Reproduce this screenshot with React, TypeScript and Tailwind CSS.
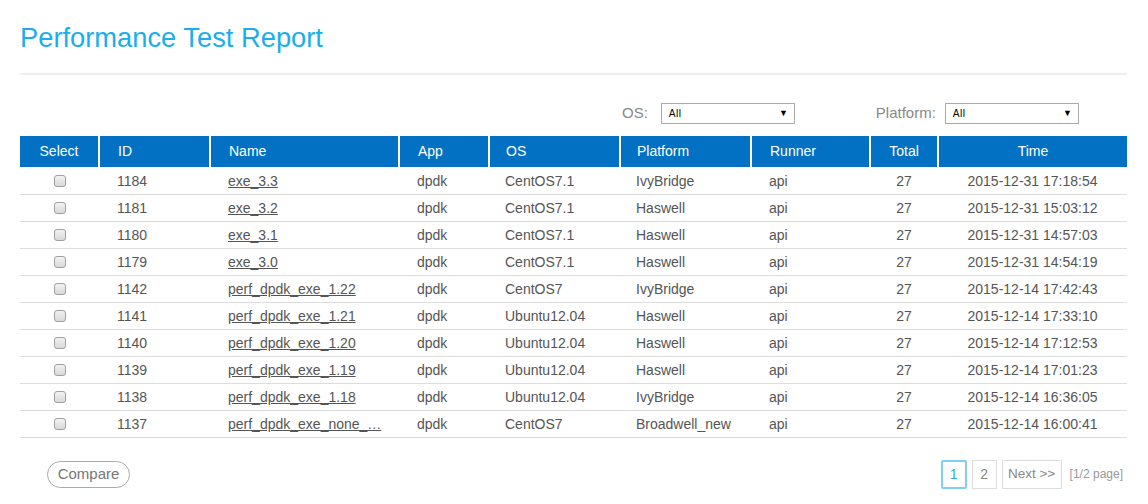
import React from 'react';

interface Report {
    id: number;
    name: string;
    app: string;
    os: string;
    platform: string;
    runner: string;
    total: number;
    time: string;
}

const reports: Report[] = [
    { id: 1184, name: 'exe_3.3', app: 'dpdk', os: 'CentOS7.1', platform: 'IvyBridge', runner: 'api', total: 27, time: '2015-12-31 17:18:54' },
    { id: 1181, name: 'exe_3.2', app: 'dpdk', os: 'CentOS7.1', platform: 'Haswell', runner: 'api', total: 27, time: '2015-12-31 15:03:12' },
    { id: 1180, name: 'exe_3.1', app: 'dpdk', os: 'CentOS7.1', platform: 'Haswell', runner: 'api', total: 27, time: '2015-12-31 14:57:03' },
    { id: 1179, name: 'exe_3.0', app: 'dpdk', os: 'CentOS7.1', platform: 'Haswell', runner: 'api', total: 27, time: '2015-12-31 14:54:19' },
    { id: 1142, name: 'perf_dpdk_exe_1.22', app: 'dpdk', os: 'CentOS7', platform: 'IvyBridge', runner: 'api', total: 27, time: '2015-12-14 17:42:43' },
    { id: 1141, name: 'perf_dpdk_exe_1.21', app: 'dpdk', os: 'Ubuntu12.04', platform: 'Haswell', runner: 'api', total: 27, time: '2015-12-14 17:33:10' },
    { id: 1140, name: 'perf_dpdk_exe_1.20', app: 'dpdk', os: 'Ubuntu12.04', platform: 'Haswell', runner: 'api', total: 27, time: '2015-12-14 17:12:53' },
    { id: 1139, name: 'perf_dpdk_exe_1.19', app: 'dpdk', os: 'Ubuntu12.04', platform: 'Haswell', runner: 'api', total: 27, time: '2015-12-14 17:01:23' },
    { id: 1138, name: 'perf_dpdk_exe_1.18', app: 'dpdk', os: 'Ubuntu12.04', platform: 'IvyBridge', runner: 'api', total: 27, time: '2015-12-14 16:36:05' },
    { id: 1137, name: 'perf_dpdk_exe_none_…', app: 'dpdk', os: 'CentOS7', platform: 'Broadwell_new', runner: 'api', total: 27, time: '2015-12-14 16:00:41' },
];

const FakeSelect: React.FC = () => (
    <div className="w-[134px] h-[21px] border border-[#a9a9a9] bg-white flex items-center justify-between pl-[7px] pr-[6px] text-[11px] text-black">
        <span className="font-['DejaVu_Sans',sans-serif] text-[10px]">All</span>
        <span className="text-[9px]">▼</span>
    </div>
);

const App: React.FC = () => {
    const th = 'h-[31px] font-normal text-white border-r-2 border-white';
    const td = 'h-[27px] pt-[2px] border-b border-[#dddddd]';

    return (
        <div className="w-[1148px] h-[504px] bg-white font-['Liberation_Sans',Arial,sans-serif] text-[14px] text-[#555]">
            <div className="ml-[20px] w-[1107px]">
                {/* Title */}
                <h1 className="pt-[22px] pb-[19px] text-[27.3px] leading-[32px] text-[#19aeec]">Performance Test Report</h1>
                <div className="h-[2px] bg-[#eeeeee]"></div>

                {/* Filters */}
                <div className="mt-[28px] h-[21px] flex items-center text-[#888] text-[15px]">
                    <span className="ml-[602px] mr-[13px]">OS:</span>
                    <FakeSelect />
                    <span className="ml-[81px] mr-[9px]">Platform:</span>
                    <FakeSelect />
                </div>

                {/* Table */}
                <table className="mt-[12px] w-[1107px] table-fixed border-collapse">
                    <colgroup>
                        <col className="w-[79px]" />
                        <col className="w-[111px]" />
                        <col className="w-[189px]" />
                        <col className="w-[90px]" />
                        <col className="w-[131px]" />
                        <col className="w-[131px]" />
                        <col className="w-[119px]" />
                        <col className="w-[68px]" />
                        <col className="w-[189px]" />
                    </colgroup>
                    <thead>
                        <tr className="bg-[#0271c3]">
                            <th className={`${th} text-center`}>Select</th>
                            <th className={`${th} text-left pl-[18px]`}>ID</th>
                            <th className={`${th} text-left pl-[18px]`}>Name</th>
                            <th className={`${th} text-left pl-[18px]`}>App</th>
                            <th className={`${th} text-left pl-[16px]`}>OS</th>
                            <th className={`${th} text-left pl-[16px]`}>Platform</th>
                            <th className={`${th} text-left pl-[18px]`}>Runner</th>
                            <th className={`${th} text-center`}>Total</th>
                            <th className="h-[31px] font-normal text-white text-center">Time</th>
                        </tr>
                    </thead>
                    <tbody>
                        {reports.map(r => (
                            <tr key={r.id}>
                                <td className={`${td} text-center`}>
                                    <span className="inline-block align-middle w-[12px] h-[12px] rounded-[3px] border border-[#a0a0a0] bg-gradient-to-b from-[#f2f2f2] to-[#d9d9d9] mb-[3px]"></span>
                                </td>
                                <td className={`${td} pl-[18px]`}>{r.id}</td>
                                <td className={`${td} pl-[18px]`}>
                                    <a className="underline text-[#555]">{r.name}</a>
                                </td>
                                <td className={`${td} pl-[18px]`}>{r.app}</td>
                                <td className={`${td} pl-[16px]`}>{r.os}</td>
                                <td className={`${td} pl-[16px]`}>{r.platform}</td>
                                <td className={`${td} pl-[18px]`}>{r.runner}</td>
                                <td className={`${td} text-center`}>{r.total}</td>
                                <td className={`${td} text-center`}>{r.time}</td>
                            </tr>
                        ))}
                    </tbody>
                </table>

                {/* Footer */}
                <div className="mt-[22px] flex items-center justify-between">
                    <button className="ml-[27px] w-[83px] h-[27px] rounded-full border border-[#aaa] text-[#777] text-[15px]">
                        Compare
                    </button>
                    <div className="flex items-center gap-[5px] mr-[4px]">
                        <span className="w-[26px] h-[29px] border-2 border-[#7fcff5] rounded-[2px] text-[#29aee8] flex items-center justify-center">1</span>
                        <span className="w-[25px] h-[29px] border border-[#ddd] text-[#888] flex items-center justify-center">2</span>
                        <span className="w-[60px] h-[29px] border border-[#ddd] text-[#888] text-[13.5px] flex items-center justify-center">Next &gt;&gt;</span>
                        <span className="ml-[3px] text-[#999] text-[12px]">[1/2 page]</span>
                    </div>
                </div>
            </div>
        </div>
    );
};

export default App;
